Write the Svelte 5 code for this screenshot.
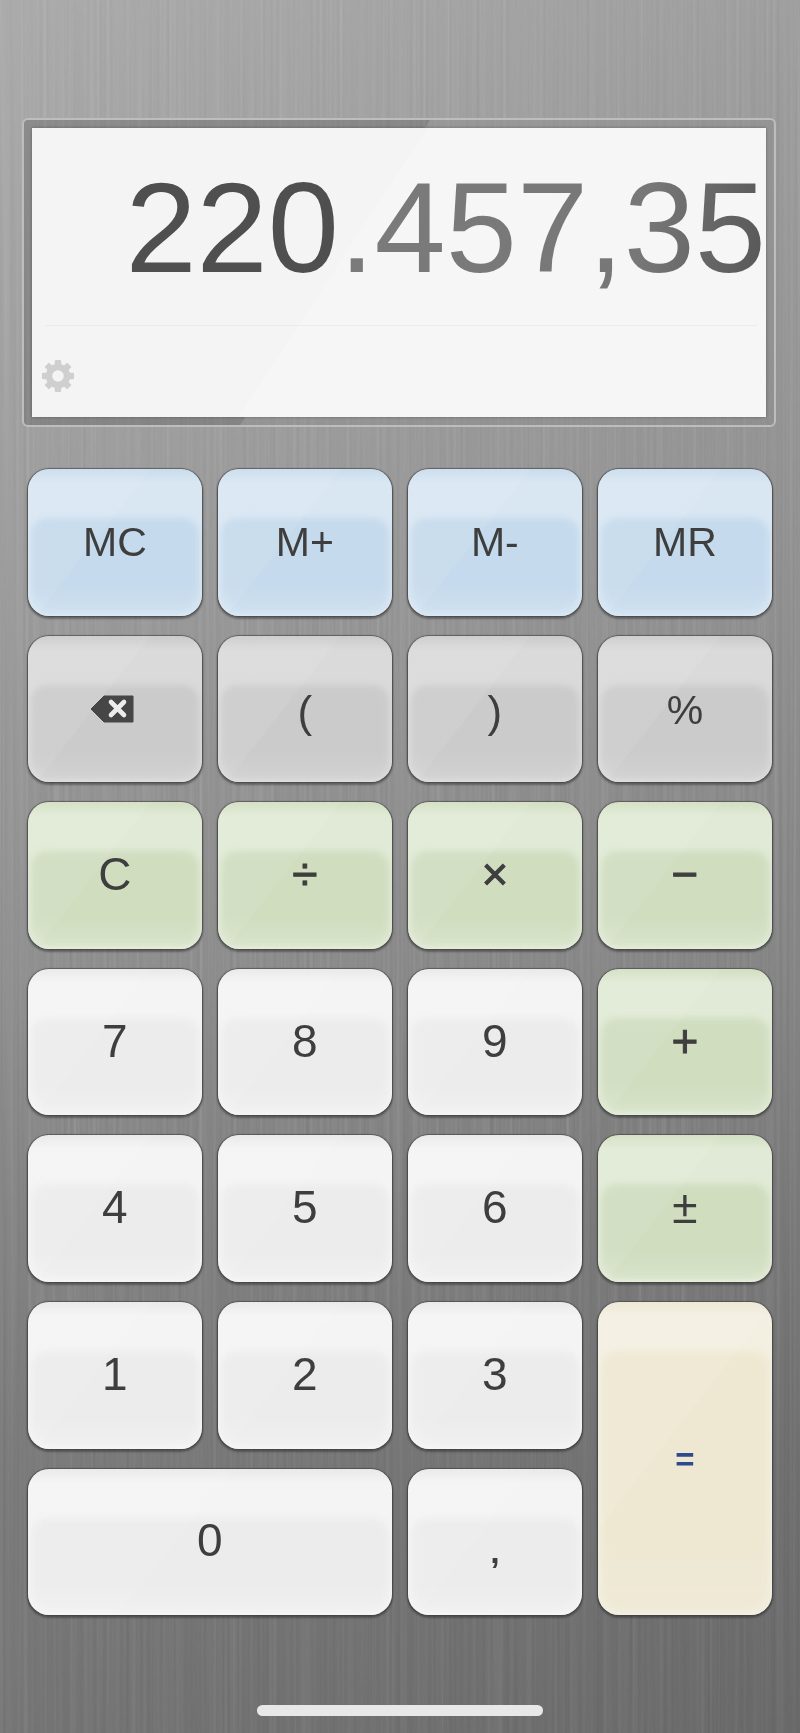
<script>
 const rows = [
  { label: 'MC', tone: 'blue', size: 'mem' },
  { label: 'M+', tone: 'blue', size: 'mem' },
  { label: 'M-', tone: 'blue', size: 'mem' },
  { label: 'MR', tone: 'blue', size: 'mem' },
  { label: 'back', tone: 'gray', icon: true },
  { label: '(', tone: 'gray', size: 'paren' },
  { label: ')', tone: 'gray', size: 'paren' },
  { label: '%', tone: 'gray', size: 'pct' },
  { label: 'C', tone: 'green' },
  { label: '÷', tone: 'green', size: 'op' },
  { label: '×', tone: 'green', size: 'op' },
  { label: '−', tone: 'green', size: 'op' },
  { label: '7' },
  { label: '8' },
  { label: '9' },
  { label: '+', tone: 'green', size: 'op' },
  { label: '4' },
  { label: '5' },
  { label: '6' },
  { label: '±', tone: 'green' },
  { label: '1' },
  { label: '2' },
  { label: '3' },
  { label: '=', tone: 'cream', size: 'eq', tall: true },
  { label: '0', wide: true },
  { label: ',', size: 'comma' }
 ];
 const teeth = [0, 45, 90, 135, 180, 225, 270, 315];
</script>

<style>
 :global(body) {
  margin: 0;
 }

 .page {
  position: relative;
  width: 800px;
  height: 1733px;
  overflow: hidden;
  display: flex;
  flex-direction: column;
  align-items: flex-start;
  font-family: "Liberation Sans", Arial, sans-serif;
  background: linear-gradient(180deg, #a2a2a2 0%, #949494 30%, #858585 55%, #6f6f6f 85%, #6a6a6a 100%);
 }

 .metal {
  position: absolute;
  inset: 0;
  width: 800px;
  height: 1733px;
  mix-blend-mode: overlay;
  opacity: 0.26;
 }

 .tint {
  position: absolute;
  inset: 0;
  background: linear-gradient(90deg, rgba(255, 255, 255, 0.04), rgba(0, 0, 0, 0.05));
 }

 .frame {
  position: relative;
  box-sizing: border-box;
  width: 754px;
  height: 309px;
  margin: 118px 0 0 22px;
  padding: 8px;
  border: 2px solid #bdbdbd;
  border-radius: 6px;
  background: rgba(70, 70, 70, 0.28);
  overflow: hidden;
 }

 .frame::after {
  content: '';
  position: absolute;
  inset: 0;
  background: rgba(255, 255, 255, 0.14);
  clip-path: polygon(406px 0, 100% 0, 100% 100%, 216px 100%);
  pointer-events: none;
 }

 .screen {
  position: relative;
  z-index: 1;
  height: 100%;
  background: #f4f4f4;
  box-shadow: 0 0 3px rgba(0, 0, 0, 0.3);
 }

 .screen::after {
  content: '';
  position: absolute;
  inset: 0;
  background: rgba(255, 255, 255, 0.2);
  clip-path: polygon(396px 0, 100% 0, 100% 100%, 206px 100%);
 }

 .value {
  position: absolute;
  right: 0;
  top: 25px;
  font-size: 128px;
  line-height: 150px;
  white-space: nowrap;
  z-index: 1;
 }

 .lead {
  color: #4f4f4f;
 }

 .rest {
  background: linear-gradient(100deg, #7b7b7b 0%, #777 70%, #565656 100%);
  -webkit-background-clip: text;
  background-clip: text;
  color: transparent;
 }

 .rule {
  position: absolute;
  left: 14px;
  right: 9px;
  top: 197px;
  height: 1px;
  background: #e9e9e9;
 }

 .gear {
  position: absolute;
  left: 9px;
  top: 231px;
  width: 34px;
  height: 34px;
  z-index: 1;
 }

 .keys {
  position: relative;
  display: grid;
  grid-template-columns: repeat(4, 173.75px);
  grid-auto-rows: 146.6px;
  column-gap: 16.25px;
  row-gap: 20px;
  margin: 42px 0 0 28px;
 }

 .wrap {
  border-radius: 21px;
  box-shadow: 0 0 1px 1px rgba(60, 60, 60, 0.6), 0 2px 2px 1px rgba(30, 30, 30, 0.4);
 }

 .wrap.tall {
  grid-row: span 2;
 }

 .wrap.wide {
  grid-column: span 2;
 }

 .key {
  position: relative;
  display: flex;
  align-items: center;
  justify-content: center;
  height: 100%;
  overflow: hidden;
  border-radius: 21px;
  color: #3e3e3e;
  font-size: 46px;
  line-height: 1;
  --top: #f4f4f4;
  --edge: #e9e9e9;
  --low: #ececec;
  --mid: #f0f0f0;
  --lip: #f8f8f8;
  background: linear-gradient(180deg, var(--edge) 0, var(--top) 14px, var(--top) calc(100% - 5px), var(--lip) 100%);
 }

 .key::before {
  content: '';
  position: absolute;
  left: 3px;
  right: 3px;
  top: 49px;
  bottom: 3px;
  border-radius: 16px 16px 20px 20px;
  background: linear-gradient(180deg, var(--low) 0, var(--low) 70%, var(--mid) 100%);
  filter: blur(3px);
 }

 .key::after {
  content: '';
  position: absolute;
  inset: 0;
  background: linear-gradient(128deg, rgba(255, 255, 255, 0.07) 0, rgba(255, 255, 255, 0.07) 42%, rgba(255, 255, 255, 0) 43%, rgba(255, 255, 255, 0) 100%);
 }

 .key span,
 .key svg {
  position: relative;
  z-index: 1;
 }

 .key span {
  margin-top: -3px;
 }

 .blue {
  --top: #d9e7f3;
  --edge: #c9dcec;
  --low: #c5daec;
  --mid: #cfe1f0;
  --lip: #dcebf6;
 }

 .gray {
  --top: #dadada;
  --edge: #cbcbcb;
  --low: #cbcbcb;
  --mid: #d2d2d2;
  --lip: #e2e2e2;
 }

 .green {
  --top: #e1ead6;
  --edge: #d2dfc2;
  --low: #d0ddbf;
  --mid: #d8e3ca;
  --lip: #e9f0e0;
 }

 .cream {
  --top: #f3f0e2;
  --edge: #ece7d3;
  --low: #eee8d2;
  --mid: #efead7;
  --lip: #f5f2e6;
 }

 .key span.mem {
  font-size: 41px;
  margin-top: 0;
 }

 .key span.paren {
  font-size: 44px;
  margin-top: 6px;
 }

 .key span.pct {
  font-size: 41px;
  margin-top: 3px;
 }

 .key span.op {
  font-size: 46px;
  -webkit-text-stroke: 0.9px #3e3e3e;
  margin-top: -2px;
 }

 .key span.eq {
  font-size: 33px;
  font-weight: bold;
  color: #2c4a8c;
  margin-top: 2px;
 }

 .key span.comma {
  font-size: 34px;
  font-weight: bold;
  margin-top: 19px;
 }

 .backspace {
  margin: 0 5px 0 0;
 }

 .home {
  position: absolute;
  left: 257px;
  top: 1705px;
  width: 286px;
  height: 11px;
  border-radius: 6px;
  background: #e8e8e8;
 }
</style>

<div class="page">
 <svg class="metal" aria-hidden="true">
  <filter id="grain" x="0" y="0" width="100%" height="100%">
   <feTurbulence type="fractalNoise" baseFrequency="0.3 0.002" numOctaves="2" seed="7" />
   <feColorMatrix type="saturate" values="0" />
  </filter>
  <rect width="800" height="1733" filter="url(#grain)" />
 </svg>
 <div class="tint"></div>

 <div class="frame">
  <div class="screen">
   <div class="value"><span class="lead">220</span><span class="rest">.457,35</span></div>
   <div class="rule"></div>
   <svg class="gear" viewBox="-17 -17 34 34" aria-hidden="true">
    {#each teeth as angle}
     <rect x="-3.2" y="-16" width="6.4" height="7" rx="1" fill="#cfcfcf" transform="rotate({angle})" />
    {/each}
    <circle r="9" fill="none" stroke="#cfcfcf" stroke-width="6.4" />
   </svg>
  </div>
 </div>

 <div class="keys">
  {#each rows as k}
   <div class="wrap {k.tall ? 'tall' : ''} {k.wide ? 'wide' : ''}">
    <div class="key {k.tone || ''}">
     {#if k.icon}
      <svg class="backspace" width="44" height="28" viewBox="0 0 44 28" aria-label="backspace">
       <path d="M43 1H14L1 14l13 13h29z" fill="#464646" stroke="#464646" stroke-width="1" stroke-linejoin="round" />
       <path d="M21 7l13 13M34 7L21 20" stroke="#ececec" stroke-width="4.6" stroke-linecap="round" />
      </svg>
     {:else}
      <span class={k.size || ''}>{k.label}</span>
     {/if}
    </div>
   </div>
  {/each}
 </div>

 <div class="home"></div>
</div>
